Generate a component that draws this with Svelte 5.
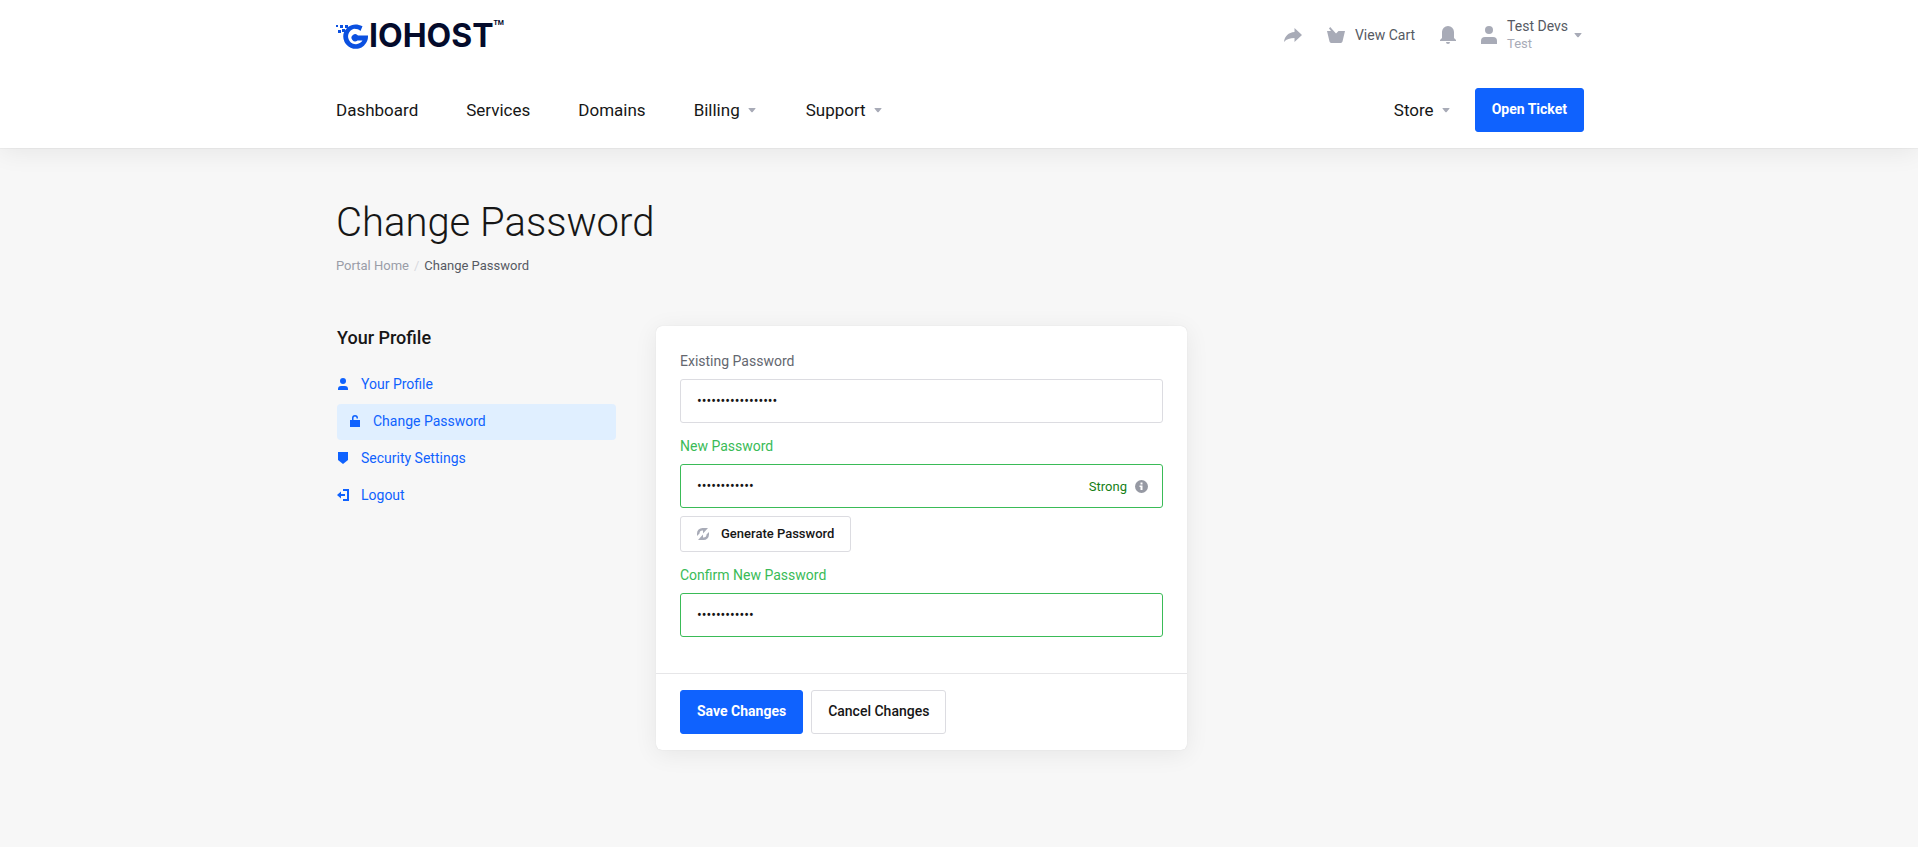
<script lang="ts">
	type NavItem = { label: string; menu?: boolean };

	const navItems: NavItem[] = [
		{ label: "Dashboard" },
		{ label: "Services" },
		{ label: "Domains" },
		{ label: "Billing", menu: true },
		{ label: "Support", menu: true },
	];

	const profileLinks = [
		{ label: "Your Profile", icon: "user" },
		{ label: "Change Password", icon: "lock" },
		{ label: "Security Settings", icon: "shield" },
		{ label: "Logout", icon: "logout" },
	];

	const activeLink = "Change Password";

	let existingPassword = $state("existing-password");
	let newPassword = $state("Xk4!pq9Zt#w2");
	let confirmPassword = $state("Xk4!pq9Zt#w2");

	let matches = $derived(newPassword.length > 0 && newPassword === confirmPassword);
	let strong = $derived(newPassword.length >= 12);

	function generatePassword() {
		const chars = "abcdefghijkmnpqrstuvwxyzABCDEFGHJKLMNPQRSTUVWXYZ23456789!#$%";
		let result = "";
		for (let i = 0; i < 12; i++) {
			result += chars[Math.floor(Math.random() * chars.length)];
		}
		newPassword = result;
		confirmPassword = result;
	}

	function clearForm() {
		existingPassword = "";
		newPassword = "";
		confirmPassword = "";
	}
</script>

{#snippet caret()}
	<svg class="caret" width="12" height="5" viewBox="0 0 12 5" aria-hidden="true">
		<path d="M2.700 0h6.600a.3.3 0 0 1 .2.500L6.700 4a1 1 0 0 1-1.400 0L2.500.5a.3.3 0 0 1 .2-.5Z" />
	</svg>
{/snippet}

<header>
	<div class="container topbar">
		<a class="logo" href="#home" aria-label="GIOHOST">
			<svg class="logo-mark" width="33" height="26" viewBox="0 0 33 26" aria-hidden="true">
				<path d="M26.500 3.200C21 .6 16 1 12 4V2H9v3h2L8.500 8A12.400 12.400 0 1 0 32 12.500L22 12.500A3.600 3.600 0 1 0 21.500 17.500h5A7.800 7.800 0 1 1 18 5.800c3 0 5 .8 6.500 2.200Z" />
				<rect x="0" y="2" width="2" height="2" />
				<rect x="4" y="2" width="3" height="3" />
				<rect x="2" y="7" width="3" height="3" />
				<rect x="6" y="6" width="3" height="3" />
			</svg>
			<span class="logo-text">IOHOST</span><span class="logo-tm">TM</span>
		</a>
		<div class="tools">
			<a class="tool" href="#share" aria-label="Share">
				<svg width="18" height="14" viewBox="0 0 18 14">
					<path d="M10.500 0l7.500 7-7.500 7v-4C6 10 2.500 11 0 14c.6-5.800 4.500-9.600 10.500-10Z" />
				</svg>
			</a>
			<a class="tool" href="#cart">
				<svg width="18" height="16" viewBox="0 0 18 16">
					<path d="M3.200 0l5.800 6.500L11.500 4H18l-2.500 10.600a1.800 1.800 0 0 1-1.800 1.400H4.300a1.800 1.800 0 0 1-1.800-1.400L0 4h4L2 1.500Z" />
				</svg>
				View Cart
			</a>
			<a class="tool" href="#notifications" aria-label="Notifications">
				<svg width="16" height="18" viewBox="0 0 16 18">
					<path d="M8 0a6 6 0 0 1 6 6v6l2 2v1H0v-1l2-2V6a6 6 0 0 1 6-6ZM6 16h4a2 2 0 0 1-4 0Z" />
				</svg>
			</a>
			<button class="tool account" type="button">
				<svg width="16" height="18" viewBox="0 0 16 18">
					<circle cx="8" cy="4" r="4" />
					<path d="M4 11h8a4 4 0 0 1 4 4v3H0v-3a4 4 0 0 1 4-4Z" />
				</svg>
				<span class="account-name">
					<span>Test Devs</span>
					<small>Test</small>
				</span>
				{@render caret()}
			</button>
		</div>
	</div>

	<div class="container navbar">
		<nav>
			{#each navItems as item}
				<a href="#{item.label.toLowerCase()}">
					{item.label}
					{#if item.menu}{@render caret()}{/if}
				</a>
			{/each}
		</nav>
		<div class="nav-right">
			<a href="#store">Store {@render caret()}</a>
			<button class="btn primary" type="button">Open Ticket</button>
		</div>
	</div>
</header>

<main class="container">
	<h1>Change Password</h1>
	<div class="breadcrumb">
		<a href="#home">Portal Home</a>
		<span class="slash">/</span>
		<span>Change Password</span>
	</div>

	<div class="content">
		<aside>
			<h2>Your Profile</h2>
			<ul>
				{#each profileLinks as link}
					<li>
						<a href="#{link.icon}" class:active={link.label === activeLink}>
							<svg width="12" height="12" viewBox="0 0 12 12" aria-hidden="true">
								{#if link.icon === "user"}
									<circle cx="6" cy="3" r="3" />
									<path d="M4 8h4a3 3 0 0 1 3 3v1H1v-1a3 3 0 0 1 3-3Z" />
								{:else if link.icon === "lock"}
									<path d="M1 5h2V3a3 3 0 0 1 6 0v.5H7.500V3a1.500 1.500 0 0 0-3 0v2H11v7H1Z" />
								{:else if link.icon === "shield"}
									<path d="M1 0h10v8L6 12 1 8Z" />
								{:else}
									<path d="M6 0h6v12H6v-2h4V2H6ZM4 2.500V5h4v2H4v2.500L0 6Z" />
								{/if}
							</svg>
							{link.label}
						</a>
					</li>
				{/each}
			</ul>
		</aside>

		<form class="card" onsubmit={(e) => e.preventDefault()}>
			<div class="card-body">
				<div class="field">
					<label for="existing">Existing Password</label>
					<input id="existing" type="password" bind:value={existingPassword} />
				</div>
				<div class="field" class:success={strong}>
					<label for="new">New Password</label>
					<div class="input-wrap">
						<input id="new" type="password" bind:value={newPassword} />
						<div class="strength">
							{strong ? "Strong" : "Weak"}
							<svg width="13" height="13" viewBox="0 0 13 13" aria-hidden="true">
								<circle cx="6.500" cy="6.500" r="6.500" />
								<path class="info" d="M5.500 2.500h2v2h-2ZM4.500 5.500h3V10h-2V7h-1Z" />
							</svg>
						</div>
					</div>
					<button class="btn small" type="button" onclick={generatePassword}>
						<svg width="12" height="12" viewBox="0 0 12 12" aria-hidden="true">
							<path d="M0 8V5.500A5.500 5.500 0 0 1 5.500 0H11L6 5.500V2.500H5.500a3 3 0 0 0-3 3ZM12 4v2.500A5.500 5.500 0 0 1 6.500 12H1l5-5.500v3h.5a3 3 0 0 0 3-3Z" />
						</svg>
						Generate Password
					</button>
				</div>
				<div class="field" class:success={matches}>
					<label for="confirm">Confirm New Password</label>
					<input id="confirm" type="password" bind:value={confirmPassword} />
				</div>
			</div>
			<div class="card-footer">
				<button class="btn primary" type="submit">Save Changes</button>
				<button class="btn" type="button" onclick={clearForm}>Cancel Changes</button>
			</div>
		</form>
	</div>
</main>

<style>
	:global(body) {
		background: #f7f7f7;
		color: #161616;
		font-family: Roboto, "Liberation Sans", sans-serif;
		font-size: 14px;
	}

	a {
		color: inherit;
		text-decoration: none;
	}

	svg {
		flex: none;
		fill: currentColor;
	}

	.container {
		max-width: 1248px;
		margin: 0 auto;
		padding-left: 2px;
	}

	header {
		background: #fff;
		box-shadow: 0 0 1px rgba(0, 0, 0, 0.2), 0 4px 24px rgba(0, 0, 0, 0.07);
	}

	.topbar {
		display: flex;
		align-items: center;
		justify-content: space-between;
		height: 72px;
	}

	.logo {
		display: flex;
		align-items: center;
		height: 26px;
		color: #040b2b;
	}

	.logo-mark {
		fill: #0b50e0;
	}

	.logo-text {
		font-family: Inter, sans-serif;
		font-size: 32px;
		font-weight: 700;
		line-height: 26px;
	}

	.logo-tm {
		align-self: flex-start;
		margin-top: -4px;
		font-size: 7px;
		font-weight: 700;
		line-height: 8px;
	}

	.tools {
		display: flex;
		align-items: center;
		gap: 25px;
		padding-bottom: 2px;
		color: #565a63;
	}

	.tool {
		display: flex;
		align-items: center;
		gap: 10px;
		line-height: 20px;
	}

	.tool svg,
	.caret {
		color: #a8abb7;
	}

	.account {
		padding: 0;
		border: 0;
		background: none;
		color: inherit;
		font: inherit;
		text-align: left;
		cursor: pointer;
	}

	.account .caret {
		margin-left: -6px;
	}

	.account-name {
		display: grid;
		line-height: 17px;
	}

	.account-name small {
		color: #a8abb7;
		font-size: 13px;
	}

	.navbar {
		display: flex;
		align-items: center;
		justify-content: space-between;
		height: 76px;
		font-size: 17px;
	}

	nav {
		display: flex;
		gap: 48px;
	}

	nav a,
	.nav-right a {
		display: flex;
		align-items: center;
		gap: 6px;
	}

	.nav-right {
		display: flex;
		align-items: center;
		gap: 23px;
	}

	.btn {
		display: inline-flex;
		align-items: center;
		box-sizing: border-box;
		height: 44px;
		padding: 0 16px 2px;
		border: 1px solid #dcdce1;
		border-radius: 3px;
		background: #fff;
		color: #161616;
		font: 500 14px Roboto, "Liberation Sans", sans-serif;
		cursor: pointer;
	}

	.btn.primary {
		border-color: #0f62fe;
		background: #0f62fe;
		color: #fff;
		font-weight: 700;
	}

	.btn.small {
		gap: 12px;
		height: 36px;
		margin-top: 8px;
		padding-bottom: 1px;
		font-size: 13px;
	}

	.btn svg {
		color: #a8abb7;
	}

	main {
		padding: 48px 0;
	}

	h1 {
		margin: 0 0 6px;
		font-size: 40px;
		font-weight: 300;
		line-height: 54px;
	}

	.breadcrumb {
		display: flex;
		gap: 5px;
		color: #565a63;
		font-size: 13px;
		line-height: 20px;
	}

	.breadcrumb a {
		color: #9a9da8;
	}

	.slash {
		color: #d8d9de;
	}

	.content {
		display: grid;
		grid-template-columns: 279px minmax(0, 531px);
		align-items: start;
		gap: 40px;
		margin-top: 50px;
		padding: 0 1px;
	}

	h2 {
		margin: 0 0 17px;
		font-size: 18px;
		font-weight: 500;
		line-height: 24px;
	}

	ul {
		display: grid;
		gap: 1px;
		margin: 0;
		padding: 0;
		list-style: none;
	}

	li a {
		display: flex;
		align-items: center;
		gap: 12px;
		box-sizing: border-box;
		height: 36px;
		padding-bottom: 2px;
		border-radius: 4px;
		color: #0f62fe;
	}

	li a.active {
		padding: 0 12px 2px;
		background: #e0efff;
	}

	.card {
		border-radius: 6px;
		background: #fff;
		box-shadow: 0 0 1px rgba(0, 0, 0, 0.15), 0 4px 24px rgba(0, 0, 0, 0.07);
	}

	.card-body {
		padding: 24px 24px 36px;
	}

	.field + .field {
		margin-top: 12px;
	}

	.field label {
		display: block;
		margin-bottom: 6px;
		color: #64676f;
		line-height: 23px;
	}

	.input-wrap {
		position: relative;
	}

	input {
		display: block;
		box-sizing: border-box;
		width: 100%;
		height: 44px;
		padding: 0 16px;
		border: 1px solid #dcdce1;
		border-radius: 3px;
		background: #fff;
		color: #161616;
		font: 14px Roboto, "Liberation Sans", sans-serif;
	}

	.success label {
		color: #3abb57;
	}

	.success input {
		border-color: #3abb57;
	}

	.strength {
		position: absolute;
		top: 0;
		right: 15px;
		display: flex;
		align-items: center;
		gap: 8px;
		height: 44px;
		color: #158015;
		font-size: 13px;
	}

	.strength svg {
		color: #9699a3;
	}

	.info {
		fill: #fff;
	}

	.card-footer {
		display: flex;
		gap: 8px;
		padding: 16px 24px;
		border-top: 1px solid #e6e6e8;
	}
</style>
